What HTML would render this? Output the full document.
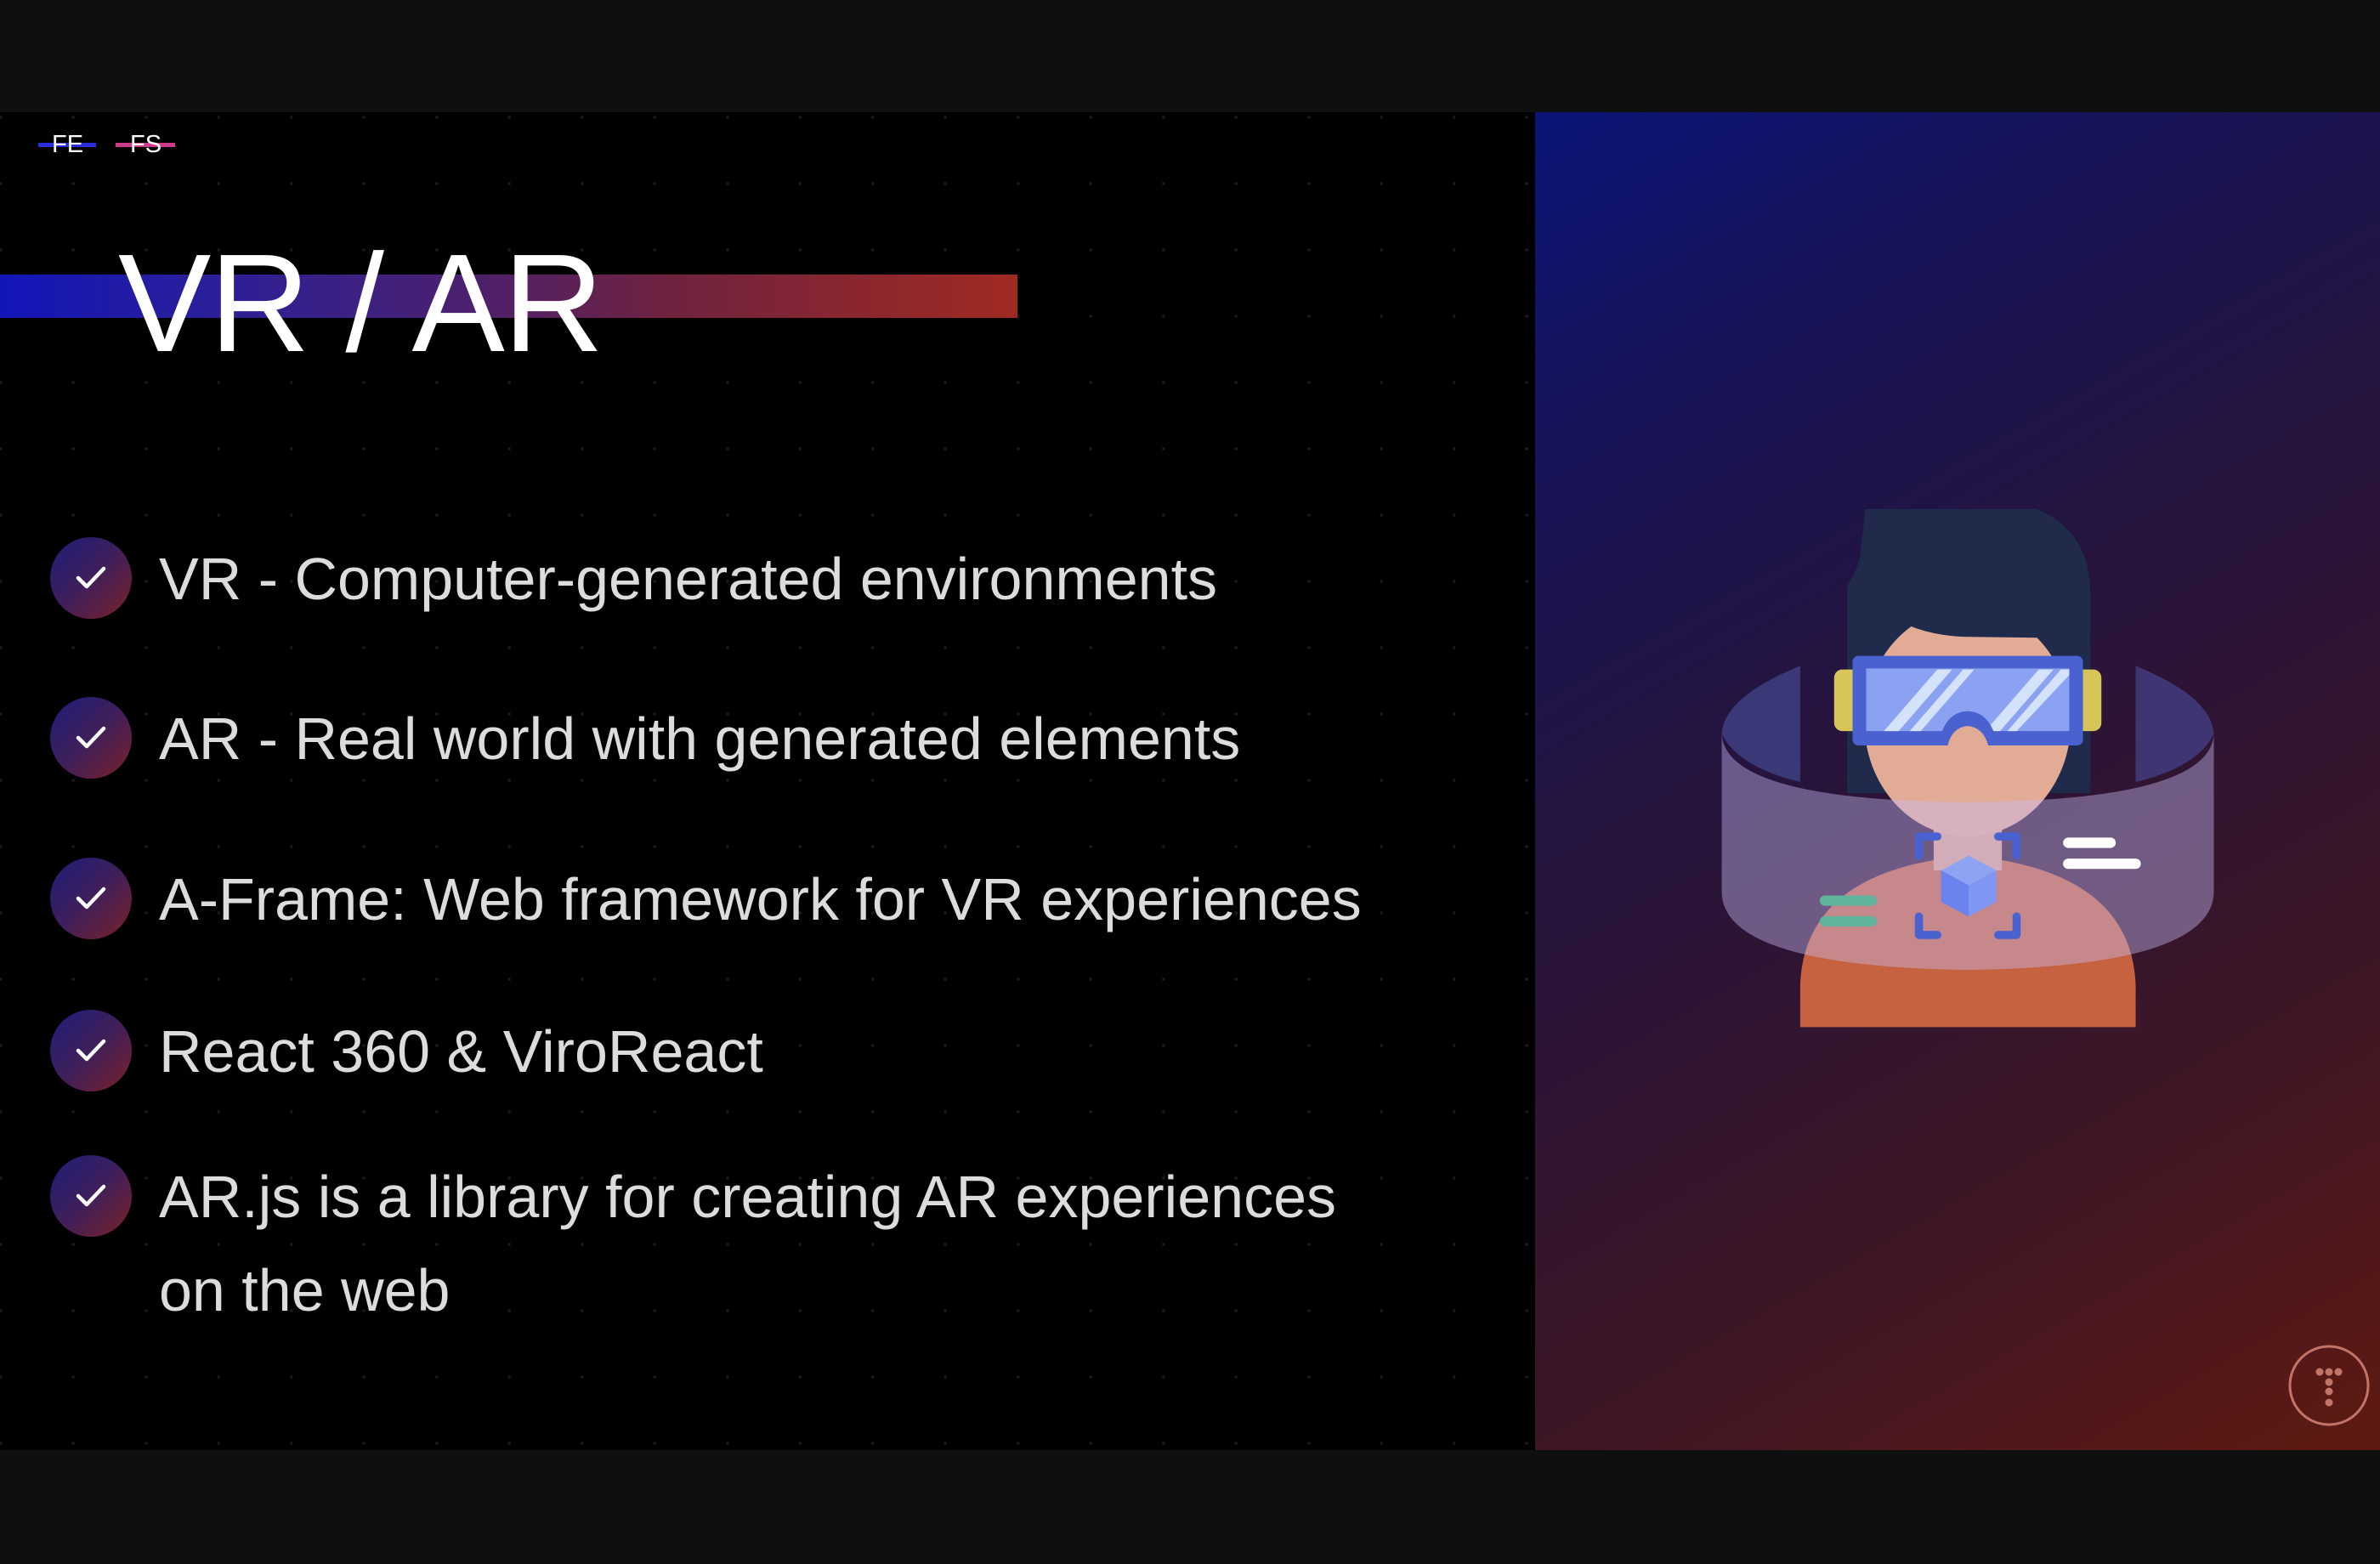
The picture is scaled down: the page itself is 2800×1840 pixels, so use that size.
<!DOCTYPE html>
<html><head><meta charset="utf-8"><style>
*{margin:0;padding:0;box-sizing:border-box}
body{width:2800px;height:1840px;background:#0e1010;position:relative;overflow:hidden;font-family:"Liberation Sans",Arial,sans-serif}
#left{position:absolute;left:0;top:132px;width:1806px;height:1574px;background-color:#000;
background-image:radial-gradient(circle,#1c1c1c 0 1.4px,transparent 2.2px);background-size:85.5px 78px;background-position:-42px -33px}
#right{position:absolute;left:1806px;top:132px;width:994px;height:1574px;
background:linear-gradient(150deg,#0b1476 0%,#1a1450 25%,#2a1438 48%,#3c1626 72%,#5e1a12 100%)}
.tag{position:absolute;top:156px;color:#fff;font-size:29px;height:28px;line-height:28px}
.tag i{position:absolute;left:0;right:0;top:12px;height:5px;z-index:0}
.tag span{position:relative;z-index:1}
#bar{position:absolute;left:0;top:323px;width:1197px;height:51px;background:linear-gradient(90deg,#1215b8 0%,#2a1f9a 20%,#4a2070 45%,#6e2240 65%,#a02a22 100%)}
#title{position:absolute;left:139px;top:262px;font-size:164px;color:#fff;line-height:190px;letter-spacing:-2px}
.chk{position:absolute;left:59px;width:96px;height:96px;border-radius:50%;background:linear-gradient(135deg,#1d1d7a 0%,#3f1f5a 50%,#7a2028 100%)}
.chk svg{position:absolute;left:30px;top:33px}
.t{position:absolute;left:187px;font-size:70px;color:#dcdcdc;white-space:nowrap;line-height:110px}
</style></head><body>
<div id="left"></div>
<div id="right"></div>
<div class="tag" style="left:45px;width:70px"><i style="background:#2a2ee0;left:0;width:68px"></i><span style="margin-left:16px">FE</span></div>
<div class="tag" style="left:136px;width:72px"><i style="background:#d03a8a;left:0;width:70px"></i><span style="margin-left:17px">FS</span></div>
<div id="bar"></div>
<div id="title">VR / AR</div>

<div class="chk" style="top:632px"><svg width="36" height="30" viewBox="0 0 36 30"><path d="M3 15 L13 25 L33 4" fill="none" stroke="#fff" stroke-width="4.5" stroke-linecap="round" stroke-linejoin="round"/></svg></div>
<div class="t" style="top:626px">VR - Computer-generated environments</div>
<div class="chk" style="top:820px"><svg width="36" height="30" viewBox="0 0 36 30"><path d="M3 15 L13 25 L33 4" fill="none" stroke="#fff" stroke-width="4.5" stroke-linecap="round" stroke-linejoin="round"/></svg></div>
<div class="t" style="top:814px">AR - Real world with generated elements</div>
<div class="chk" style="top:1009px"><svg width="36" height="30" viewBox="0 0 36 30"><path d="M3 15 L13 25 L33 4" fill="none" stroke="#fff" stroke-width="4.5" stroke-linecap="round" stroke-linejoin="round"/></svg></div>
<div class="t" style="top:1003px">A-Frame: Web framework for VR experiences</div>
<div class="chk" style="top:1188px"><svg width="36" height="30" viewBox="0 0 36 30"><path d="M3 15 L13 25 L33 4" fill="none" stroke="#fff" stroke-width="4.5" stroke-linecap="round" stroke-linejoin="round"/></svg></div>
<div class="t" style="top:1182px">React 360 &amp; ViroReact</div>
<div class="chk" style="top:1359px"><svg width="36" height="30" viewBox="0 0 36 30"><path d="M3 15 L13 25 L33 4" fill="none" stroke="#fff" stroke-width="4.5" stroke-linecap="round" stroke-linejoin="round"/></svg></div>
<div class="t" style="top:1353px">AR.js is a library for creating AR experiences</div>
<div class="t" style="top:1463px">on the web</div>

<svg style="position:absolute;left:1980px;top:560px" width="680" height="680" viewBox="0 0 1568 1568">
 <path d="M105 700 Q110 600 318 515 L318 830 Q150 790 105 700 Z" fill="#3b3878"/>
 <path d="M1440 700 Q1435 600 1228 515 L1228 830 Q1395 790 1440 700 Z" fill="#3f3572"/>
 <path d="M495 90 L960 90 Q1105 150 1105 320 L1105 860 L445 860 L445 300 Q470 260 480 220 Z" fill="#202b4b"/>
 <path d="M318 1495 L318 1380 Q330 1070 772 1030 Q1215 1070 1228 1380 L1228 1495 Z" fill="#c6623f"/>
 <rect x="680" y="940" width="185" height="130" fill="#d9a08e"/>
 <ellipse cx="772" cy="668" rx="280" ry="310" fill="#e2ab96"/>
 <path d="M470 300 L540 360 Q620 430 760 436 L1060 440 L1060 280 L470 280 Z" fill="#202b4b"/>
 <rect x="410" y="525" width="725" height="167" rx="22" fill="#d8c55a"/>
 <rect x="460" y="488" width="625" height="243" rx="16" fill="#4a62cf"/>
 <rect x="497" y="522" width="551" height="170" fill="#8ba1f1"/>
 <path d="M545 692 L690 525 L730 525 L585 692 Z M615 692 L760 525 L790 525 L645 692 Z M820 692 L965 525 L1005 525 L860 692 Z M880 692 L1025 525 L1048 525 L1048 540 L905 692 Z" fill="#d5e2fb"/>
 <path d="M680 731 L700 700 Q720 640 772 638 Q825 640 845 700 L865 731 Z" fill="#4a62cf"/>
 <path d="M718 731 Q730 682 772 678 Q815 682 828 731 Z" fill="#e2ab96"/>
 <path d="M105 700 L105 1130 Q110 1330 772 1340 Q1435 1330 1440 1130 L1440 700 Q1430 880 772 885 Q115 880 105 700 Z" fill="#c7bdf5" fill-opacity="0.42"/>
 <g fill="none" stroke="#4a62cf" stroke-width="22" stroke-linecap="round" stroke-linejoin="round">
  <path d="M640 1030 L640 978 L690 978"/><path d="M855 978 L905 978 L905 1030"/>
  <path d="M640 1195 L640 1245 L690 1245"/><path d="M855 1245 L905 1245 L905 1195"/>
 </g>
 <path d="M700 1070 L775 1030 L850 1070 L775 1110 Z" fill="#8ea4f3"/>
 <path d="M700 1070 L775 1110 L775 1195 L700 1155 Z" fill="#6a83ee"/>
 <path d="M850 1070 L775 1110 L775 1195 L850 1155 Z" fill="#7f97f2"/>
 <g stroke-linecap="round" stroke-width="28">
  <path d="M1045 995 L1160 995" stroke="#fff"/><path d="M1045 1052 L1228 1052" stroke="#fff"/>
  <path d="M385 1152 L512 1152" stroke="#5fb49b"/><path d="M385 1208 L512 1208" stroke="#5fb49b"/>
 </g>
</svg>

<svg style="position:absolute;left:2690px;top:1580px" width="100" height="100" viewBox="0 0 100 100">
 <circle cx="50" cy="50" r="46" fill="none" stroke="#c27468" stroke-width="3"/>
 <g fill="#c27468"><circle cx="39" cy="34" r="4.5"/><circle cx="50" cy="34" r="4.5"/><circle cx="61" cy="34" r="4.5"/><circle cx="50" cy="46" r="4.5"/><circle cx="50" cy="57" r="4.5"/><circle cx="50" cy="70" r="4.5"/></g>
</svg>
</body></html>
